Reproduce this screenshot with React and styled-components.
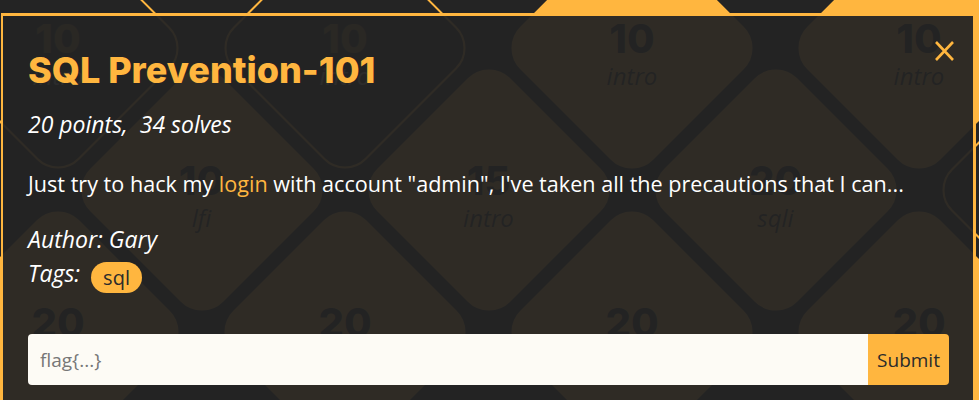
import React from "react";
import styled, { createGlobalStyle } from "styled-components";

const ORANGE = "#ffb63f";

const Global = createGlobalStyle`
  html, body { margin: 0; padding: 0; background: #242424; overflow: hidden; }
  body { font-family: "Open Sans", "Liberation Sans", sans-serif; }
`;

const Page = styled.div`
  position: relative;
  width: 979px;
  height: 400px;
  overflow: hidden;
`;

// challenge board behind the dialog
const Board = styled.div`
  display: flex;
  flex-direction: column;
  margin: -23px 0 0 -85.5px;
`;

const Row = styled.div`
  display: flex;
  height: 142px;
  padding-left: ${(p) => (p.$shift ? "143.5px" : "0")};
`;

const Cell = styled.div`
  flex: 0 0 287px;
  display: grid;
  grid-template: 142px / 287px;
  place-items: center;
`;

const Diamond = styled.div`
  grid-area: 1 / 1;
  width: 188px;
  height: 188px;
  box-sizing: border-box;
  border-radius: 30px;
  transform: rotate(45deg);
  border: 2px solid ${ORANGE};
  background: ${(p) => (p.$solved ? "transparent" : ORANGE)};
`;

const Face = styled.div`
  grid-area: 1 / 1;
  position: relative;
  display: flex;
  flex-direction: column;
  align-items: center;
  padding-top: 16px;
`;

const Score = styled.span`
  font-family: Inter, sans-serif;
  font-weight: 800;
  font-size: 40px;
  line-height: 40px;
  color: ${(p) => (p.$solved ? "#9a7436" : "#222")};
`;

const Category = styled.span`
  font-style: italic;
  font-size: 24px;
  line-height: 34px;
  color: ${(p) => (p.$solved ? "#bbb" : "#222")};
`;

// dialog
const Modal = styled.div`
  position: absolute;
  top: 13px;
  left: 1px;
  width: 975px;
  height: 430px;
  box-sizing: border-box;
  border: 3px solid ${ORANGE};
  border-left-width: 2px;
  background: rgba(36, 36, 36, 0.95);
  padding: 30px 24px 0 25px;
  color: #fff;
`;

const Header = styled.div`
  display: flex;
  justify-content: space-between;
  align-items: flex-start;
`;

const Title = styled.h1`
  margin: 0;
  font-family: Inter, sans-serif;
  font-weight: 800;
  font-size: 36px;
  line-height: 48px;
  color: ${ORANGE};
`;

const Close = styled.button`
  margin: -6px -6px 0 0;
  padding: 0;
  border: 0;
  background: none;
  display: flex;
  cursor: pointer;
`;

const Meta = styled.p`
  margin: ${(p) => p.$gap || 0} 0 0;
  font-style: italic;
  font-size: 23px;
  line-height: 34px;
`;

const Stats = styled(Meta)`
  line-height: 30px;
`;

const Description = styled.p`
  margin: 30px 0 0;
  font-size: 21.6px;
  line-height: 30px;

  a {
    color: ${ORANGE};
    text-decoration: none;
  }
`;

const TagsRow = styled.div`
  display: flex;
  align-items: flex-start;
  gap: 11px;
`;

const Tag = styled.span`
  margin-top: 6px;
  height: 31px;
  line-height: 31px;
  padding: 0 12px;
  border-radius: 16px;
  background: ${ORANGE};
  color: #2b2b2b;
  font-size: 20px;
`;

const Form = styled.form`
  display: flex;
  margin-top: 41px;
  height: 51px;
`;

const FlagInput = styled.input`
  flex: 1;
  min-width: 0;
  border: 0;
  outline: none;
  border-radius: 4px 0 0 4px;
  padding: 0 12px;
  background: #fdfbf5;
  font-family: "Open Sans", sans-serif;
  font-size: 19px;
  color: #333;

  &::placeholder {
    color: #777;
  }
`;

const Submit = styled.button`
  width: 81px;
  border: 0;
  border-radius: 0 4px 4px 0;
  background: ${ORANGE};
  color: #2b2b2b;
  font-family: "Open Sans", sans-serif;
  font-size: 19px;
  cursor: pointer;
`;

const rows = [
  { shift: false, items: [[10, "intro", true], [10, "intro", true], [10, "intro"], [10, "intro"]] },
  { shift: true, items: [[10, "lfi"], [15, "intro"], [20, "sqli"], [20, "sqli", true]] },
  { shift: false, items: [[20, "intro"], [20, "sqli"], [20, "xss"], [20, "sqli"]] },
];

function App() {
  return (
    <Page>
      <Global />
      <Board>
        {rows.map((row, i) => (
          <Row key={i} $shift={row.shift}>
            {row.items.map(([pts, cat, solved], j) => (
              <Cell key={j}>
                <Diamond $solved={solved} />
                <Face>
                  <Score $solved={solved}>{pts}</Score>
                  <Category $solved={solved}>{cat}</Category>
                </Face>
              </Cell>
            ))}
          </Row>
        ))}
      </Board>

      <Modal>
        <Header>
          <Title>SQL Prevention-101</Title>
          <Close aria-label="close">
            <svg width="21" height="22" viewBox="0 0 21 22">
              <path d="M2 2 L19 20 M19 2 L2 20" stroke={ORANGE} strokeWidth="2.6" fill="none" />
            </svg>
          </Close>
        </Header>
        <Stats $gap="15px">20 points,&nbsp; 34 solves</Stats>
        <Description>
          Just try to hack my <a href="#">login</a> with account "admin", I've taken all the
          precautions that I can...
        </Description>
        <Meta $gap="23px">Author: Gary</Meta>
        <TagsRow>
          <Meta>Tags:</Meta>
          <Tag>sql</Tag>
        </TagsRow>
        <Form onSubmit={(e) => e.preventDefault()}>
          <FlagInput placeholder="flag{...}" />
          <Submit type="submit">Submit</Submit>
        </Form>
      </Modal>
    </Page>
  );
}

export default App;
